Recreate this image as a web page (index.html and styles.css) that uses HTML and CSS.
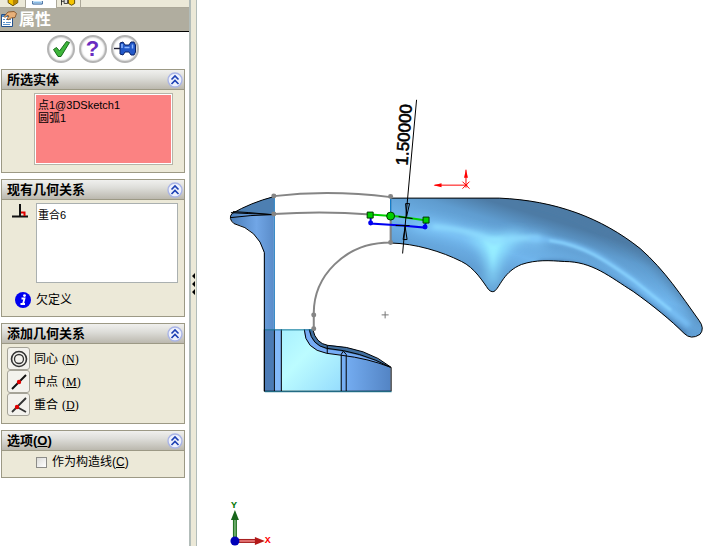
FILE: index.html
```html
<!DOCTYPE html>
<html lang="zh-CN">
<head>
    <meta charset="UTF-8">
    <meta name="viewport" content="width=device-width, initial-scale=1.0">
    <title>属性</title>
    <link rel="stylesheet" href="styles.css">
</head>
<body>
    <svg class="defs" aria-hidden="true">
        <symbol id="chevrons" viewBox="0 0 16 16">
            <circle cx="8" cy="8" r="7" fill="#eef1fc" stroke="#a9b4e6" stroke-width="1.4"/>
            <path d="M4.5 7.5 8 4l3.500 3.500M4.500 12 8 8.500 11.500 12" fill="none" stroke="#1c3fb4" stroke-width="1.6"/>
        </symbol>
    </svg>

    <div class="app">
        <aside class="sidebar">
            <div class="tabs">
                <button class="tab" aria-label="特征树">
                    <svg width="25" height="8" viewBox="0 0 25 8"><path d="M7.500-3h11v6l-5.500 3.500L7.500 3z" fill="#f5c400" stroke="#4d3b00"/><path d="M13 0v6l5-3V0z" fill="#b88600"/></svg>
                </button>
                <button class="tab active" aria-label="属性管理器">
                    <svg width="30" height="8" viewBox="0 0 30 8"><path d="M5.500-1v4.500h11V-1" fill="#d9efff" stroke="#174a8a"/><path d="M7 1.500h8" stroke="#6aa7dc"/></svg>
                </button>
                <button class="tab" aria-label="配置">
                    <svg width="23" height="8" viewBox="0 0 23 8"><path d="M3.500 0v6M3 1.500h6M10 3h3" stroke="#222" fill="none"/><path d="M6.500-1v5h4v-5" fill="#ddd" stroke="#333"/><path d="M11.500-1v5l3.500 2 3.500-2v-5z" fill="#f5c400" stroke="#4d3b00"/></svg>
                </button>
            </div>

            <div class="title-bar">
                <svg width="18" height="18" viewBox="0 0 18 18">
                    <path d="M1.500 3.500h11v12h-11z" fill="#fff" stroke="#23508c"/>
                    <path d="M2 5h10" stroke="#4b8fd0" stroke-width="2"/>
                    <path d="M3 8.500h2M6 8.500h5M3 11.500h2M6 11.500h5M3 13.500h7" stroke="#5a93cc"/>
                    <path d="M4 5.500 8 1l6-.5 2.500 2-1.500 4-4 .5-3 2-1-1 2-3-2-.500-2 2z" fill="#e7b079" stroke="#7c4a1d" stroke-width=".8"/>
                </svg>
                <h1>属性</h1>
            </div>

            <div class="actions">
                <button class="round" aria-label="确定">
                    <svg width="20" height="20" viewBox="0 0 20 20"><path d="M2.500 10.500l3-2L8.500 12 15.500 2.500l3 1L10 17.500H7z" fill="#3db53a" stroke="#176b1c"/></svg>
                </button>
                <button class="round help" aria-label="帮助">?</button>
                <button class="round" aria-label="保持可见">
                    <svg width="24" height="20" viewBox="0 0 24 20"><path d="M1 9.500h8" stroke="#223" stroke-width="1.400"/><path d="M7 4l3-1 2 3h4l2-3h3l1.500 3v7L21 16h-3l-2-3h-4l-2 3-3-1z" fill="#2258c8" stroke="#0b2368"/><path d="M11.500 8.500h5M19.500 5.500v4M9 5v4" stroke="#8fb8ff" stroke-width="1.500"/></svg>
                </button>
            </div>

            <section class="group">
                <div class="group-header">
                    <h2>所选实体</h2>
                    <button class="collapse" aria-label="折叠所选实体"><svg><use href="#chevrons"/></svg></button>
                </div>
                <div class="group-body selected">
                    <select class="list pink" size="5" multiple aria-label="所选实体">
                        <option>点1@3DSketch1</option>
                        <option>圆弧1</option>
                    </select>
                </div>
            </section>

            <section class="group">
                <div class="group-header">
                    <h2>现有几何关系</h2>
                    <button class="collapse" aria-label="折叠现有几何关系"><svg><use href="#chevrons"/></svg></button>
                </div>
                <div class="group-body existing">
                    <svg width="18" height="18" viewBox="0 0 18 18"><path d="M1 13.500h16M9 1v12" stroke="#111" stroke-width="2"/><path d="M10 9.500h3.500V13" fill="none" stroke="#e00000" stroke-width="2"/></svg>
                    <select class="list" size="5" multiple aria-label="现有几何关系">
                        <option>重合6</option>
                    </select>
                    <svg class="info" width="16" height="16" viewBox="0 0 16 16"><circle cx="8" cy="8" r="8" fill="#0000f0"/><path d="M6.500 6.500h3L8 12h2M5.500 12h3" stroke="#fff" stroke-width="1.800" fill="none"/><circle cx="9.500" cy="3.600" r="1.400" fill="#fff"/></svg>
                    <p class="status">欠定义</p>
                </div>
            </section>

            <section class="group">
                <div class="group-header">
                    <h2>添加几何关系</h2>
                    <button class="collapse" aria-label="折叠添加几何关系"><svg><use href="#chevrons"/></svg></button>
                </div>
                <div class="group-body relations">
                    <button class="relation">
                        <span class="key"><svg width="18" height="18" viewBox="0 0 18 18" fill="none" stroke="#333"><circle cx="9" cy="9" r="7.500" stroke-width="1.600"/><circle cx="9" cy="9" r="4.500" stroke-width="1.300"/></svg></span>
                        同心 <span class="hotkey">(<u>N</u>)</span>
                    </button>
                    <button class="relation">
                        <span class="key"><svg width="18" height="18" viewBox="0 0 18 18"><path d="M2 16 16 2" stroke="#111" stroke-width="2"/><circle cx="9" cy="9" r="2.200" fill="#e00000"/></svg></span>
                        中点 <span class="hotkey">(<u>M</u>)</span>
                    </button>
                    <button class="relation">
                        <span class="key"><svg width="18" height="18" viewBox="0 0 18 18"><path d="M2 16 16 2M7 11l9 5" stroke="#333" stroke-width="1.800"/><circle cx="7" cy="11" r="2.200" fill="#e00000"/></svg></span>
                        重合 <span class="hotkey">(<u>D</u>)</span>
                    </button>
                </div>
            </section>

            <section class="group">
                <div class="group-header">
                    <h2>选项(<u>O</u>)</h2>
                    <button class="collapse" aria-label="折叠选项"><svg><use href="#chevrons"/></svg></button>
                </div>
                <div class="group-body options">
                    <input type="checkbox" id="construction">
                    <label for="construction">作为构造线(<u>C</u>)</label>
                </div>
            </section>
        </aside>

        <div class="splitter">
            <svg width="5" height="24" viewBox="0 0 5 24"><path d="M4 1v6L1 4zM4 9v6L1 12zM4 17v6l-3-3z" fill="#000"/></svg>
        </div>

        <main class="viewport">
            <svg class="model" viewBox="197 -1 517 546" preserveAspectRatio="xMinYMin meet" role="img" aria-label="三维草图">
                <defs>
                    <linearGradient id="handle" gradientUnits="userSpaceOnUse" x1="480" y1="197" x2="460" y2="262">
                        <stop offset="0" stop-color="#4d7ba5"/>
                        <stop offset=".25" stop-color="#5f9ccf"/>
                        <stop offset=".65" stop-color="#70b5ec"/>
                        <stop offset="1" stop-color="#619fd4"/>
                    </linearGradient>
                    <linearGradient id="beak" x1="0" y1="0" x2="1" y2="0">
                        <stop offset="0" stop-color="#4a7db8"/>
                        <stop offset=".6" stop-color="#71a6e6"/>
                        <stop offset="1" stop-color="#5a8cc9"/>
                    </linearGradient>
                    <linearGradient id="glass" x1="0" y1="0" x2="1" y2="1">
                        <stop offset="0" stop-color="#a9f0ff"/>
                        <stop offset=".4" stop-color="#bcfcff"/>
                        <stop offset="1" stop-color="#95dcfd"/>
                    </linearGradient>
                    <linearGradient id="base" x1="0" y1="0" x2="1" y2="0">
                        <stop offset="0" stop-color="#78b1f6"/>
                        <stop offset="1" stop-color="#5384c4"/>
                    </linearGradient>
                    <filter id="soft" filterUnits="userSpaceOnUse" x="370" y="170" width="350" height="190"><feGaussianBlur stdDeviation="6"/></filter>
                    <filter id="fine" filterUnits="userSpaceOnUse" x="370" y="170" width="350" height="190"><feGaussianBlur stdDeviation="2"/></filter>
                    <filter id="thin" filterUnits="userSpaceOnUse" x="370" y="170" width="350" height="190"><feGaussianBlur stdDeviation="1"/></filter>
                    <path id="handle-shape" d="M391 197.500H500C556 200 602 217 641 248C666 270 682 295 700 320Q706 328 701 334Q692 340 685 333C672 320 655 306 634 291C610 276 593 261 565 261C550 260 537 259 522 264C505 271 501 285 496 290Q493 293 489 289C484 282 475 267 462 261C442 251 416 243 391 242.500Z"/>
                    <clipPath id="handle-clip"><use href="#handle-shape"/></clipPath>
                </defs>

                <!-- handle -->
                <use href="#handle-shape" fill="url(#handle)"/>
                <g clip-path="url(#handle-clip)" fill="none">
                    <path d="M530 190C580 200 612 219 645 246C672 270 686 293 708 322" stroke="#4d7ba5" stroke-width="12" filter="url(#soft)"/>
                    <path d="M540 264C585 260 605 277 634 294L686 336" stroke="#477cb0" stroke-width="8" filter="url(#fine)"/>
                    <path d="M415 224Q460 228 493 243Q515 235 545 241" stroke="#86d0ff" stroke-width="8" filter="url(#soft)"/>
                    <path d="M472 235Q491 245 493 285Q497 247 520 235Q495 242 472 235Z" fill="#91e8ff" stroke="#8bdfff" stroke-width="6" filter="url(#soft)"/>
                    <path d="M482 238Q493 246 493 272Q495 246 506 238Z" fill="#97eeff" filter="url(#fine)"/>
                    <path d="M433 226Q472 229 494 242Q518 235 541 238" stroke="#8fddff" stroke-width="4" filter="url(#fine)"/>
                    <path d="M530 238C583 239 608 260 636 281L690 325" stroke="#7cc4fa" stroke-width="4" filter="url(#fine)"/>
                    <path d="M550 240C586 245 608 261 636 281L672 310" stroke="#8bd6ff" stroke-width="2" filter="url(#thin)"/>
                </g>
                <use href="#handle-shape" fill="none" stroke="#000"/>
                <path d="M391 197v17" stroke="#158be0"/>

                <!-- beak and left column -->
                <path d="M274 196Q251 202 232 213Q228 218 234 223Q258 229 264 252V391H274Z" fill="url(#beak)"/>
                <path d="M274 196Q251 202 232 213L274 214Z" fill="#4d7fb2"/>
                <path d="M274 196Q251 202 232 213Q228 218 234 223Q258 229 264.500 252V391M231 212l18 1 25 1M231 217l20-2 23-1M233 211l16 1 22 2" fill="none" stroke="#000"/>
                <path d="M274.500 196v133" stroke="#1777bd"/>

                <!-- base -->
                <path d="M265 329h9v62h-9z" fill="#4b7ab5"/>
                <path d="M274 329h8v62h-8z" fill="#82b8fa"/>
                <path d="M282 329H304Q306 350 328 353L342 355V391H282Z" fill="url(#glass)"/>
                <path d="M341 349Q370 354 391 367V391H341Z" fill="url(#base)"/>
                <path d="M304 329H313Q316 343 328 345Q365 347 391 367L385 365Q362 357 342 355L327 353Q305 349 304 329Z" fill="#76acf6"/>
                <path d="M309 329H313Q316 343 328 345Q365 347 391 367Q359 352 327 349Q311 344 309 329Z" fill="#416f9f"/>
                <path d="M264.500 329V391H391.500V367Q367 347 328 345Q316 343 313 329M274.500 329v62M281.500 329v62M304.500 329Q305 349 327 353L342 355Q368 358 391 367M309.500 329Q312 345 327 348Q361 351 391 367M327.500 345v8M341.500 391V354l2-3 3 3V391" fill="none" stroke="#000"/>
                <path d="M265 329.500h48M265 391.500h127" stroke="#1b7898"/>

                <!-- sketch curves -->
                <g fill="none" stroke="#858585" stroke-width="2">
                    <path d="M274 195.500Q330 189 391 196.500M274 213.500Q323 210 371 214M391 214v28C345 242 313 276 314 315V329"/>
                </g>
                <g fill="#858585">
                    <circle cx="274" cy="195.500" r="2.500"/><circle cx="274" cy="213.500" r="2.500"/><circle cx="391" cy="196" r="2.500"/>
                    <circle cx="391" cy="242" r="2.500"/><circle cx="314" cy="314.500" r="2.500"/><circle cx="314" cy="328.500" r="2.500"/>
                </g>
                <path d="M382 314.500h7M385.500 311v7" stroke="#777"/>

                <!-- dimension -->
                <path d="M371 214v9l31 2 23 2 2-8" fill="none" stroke="#0000f0" stroke-width="2"/>
                <circle cx="371" cy="222.500" r="2.500" fill="#0000f0"/><circle cx="425.500" cy="226.500" r="2.500" fill="#0000f0"/>
                <path d="M371 214l28 2 28 4" fill="none" stroke="#00d000" stroke-width="2"/>
                <path d="M417 99 403 253M399 216l14 2M396 225h14" stroke="#000" fill="none"/>
                <path d="M406 203h4l-3 13zM403.500 239h4l-2-13z" fill="none" stroke="#000"/>
                <path d="M367.500 211.500h6v6h-6zM423.500 216.500h6v6h-6z" fill="#00d000" stroke="#003800"/>
                <circle cx="391" cy="215.500" r="4" fill="#00d000" stroke="#003800"/>
                <text class="dimension" transform="translate(408 165) rotate(-86)">1.50000</text>

                <!-- sketch origin -->
                <path d="M435 184.500h33M466.500 169v18M463 181l7 7M470 181l-7 7" stroke="#f00" fill="none"/>
                <path d="M434 184.500l8-2v4zM466.500 169l-2 8h4z" fill="#f00"/>

                <!-- view triad -->
                <path d="M235 540V517" stroke="#207020" stroke-width="4"/>
                <path d="M235 540V517" stroke="#69a969" stroke-width="2"/>
                <path d="M235 510l-4 10h8z" fill="#17641b"/>
                <path d="M236 541h22" stroke="#a51d1d" stroke-width="4"/>
                <path d="M236 541h22" stroke="#e07070" stroke-width="2"/>
                <path d="M265 541l-10-4v8z" fill="#b31818"/>
                <circle cx="235" cy="541" r="4.500" fill="#0000b8"/>
                <text class="axis axis-y" x="231" y="508">Y</text>
                <text class="axis axis-x" x="265" y="543">X</text>
            </svg>
        </main>
    </div>
</body>
</html>
```
FILE: styles.css
```css
* {
    box-sizing: border-box;
}

body {
    margin: 0;
    background-color: #fff;
    color: #000;
    font-family: "Liberation Sans", "Noto Sans CJK SC", sans-serif;
    font-size: 12px;
    line-height: 16px;
}

button {
    padding: 0;
    border: none;
    background: none;
    color: inherit;
    font: inherit;
}

svg {
    display: block;
}

.defs {
    display: none;
}

.app {
    display: flex;
    height: 100vh;
    overflow: hidden;
}

.sidebar {
    flex: 0 0 189px;
    overflow: hidden;
}

.tabs {
    display: flex;
    height: 8px;
    background-color: #ece9d8;
    border-bottom: 1px solid #aca899;
}

.tab {
    height: 7px;
    overflow: hidden;
    border-right: 1px solid #aca899;
}

.tab svg {
    height: 7px;
}

.tab.active {
    height: 8px;
    background-color: #fff;
}

.title-bar {
    display: flex;
    align-items: center;
    gap: 1px;
    height: 24px;
    background-color: #b0ad9f;
    border-bottom: 1px solid #000;
}

.title-bar h1 {
    margin: 0;
    color: #fff;
    font-size: 16px;
    font-weight: bold;
}

.actions {
    display: flex;
    justify-content: center;
    gap: 4px;
    padding: 3px 4px 6px 0;
}

.round {
    display: flex;
    align-items: center;
    justify-content: center;
    width: 28px;
    height: 28px;
    border: 2px solid #b4b4b4;
    border-radius: 50%;
    background-color: #fff;
    box-shadow: inset 0 0 2px #999;
}

.round svg {
    flex: none;
}

.help {
    color: #6a2cc0;
    font-size: 22px;
    font-weight: bold;
}

.group {
    margin: 0 4px 6px 1px;
    border: 1px solid #9c9985;
    background-color: #ece9d8;
}

.group-header {
    display: flex;
    align-items: center;
    justify-content: space-between;
    height: 20px;
    padding: 0 1px 0 5px;
    border-bottom: 1px solid #9c9985;
    background: linear-gradient(#f0f0ee, #dededa 40%, #bbb8ae);
}

.group-header h2 {
    margin: 0;
    font-size: 13px;
    font-weight: bold;
}

.collapse svg {
    width: 16px;
    height: 16px;
}

.list {
    display: block;
    width: 100%;
    margin: 0;
    padding: 0;
    border: 1px solid #aab0b0;
    border-radius: 0;
    background-color: #fff;
    color: #000;
    font-family: inherit;
    font-size: 11px;
    overflow: hidden;
    outline: none;
}

.list option {
    height: 13px;
    min-height: 0;
    padding: 0 1px;
    line-height: 13px;
}

.list.pink {
    height: 72px;
    border-color: #b5b5a8;
    background-color: #fb8282;
    box-shadow: inset 0 0 0 1px #fff;
    padding: 2px;
}

.selected {
    padding: 3px 11px 7px 32px;
}

.existing {
    display: grid;
    grid-template-columns: 20px 1fr;
    column-gap: 5px;
    row-gap: 9px;
    padding: 3px 6px 8px 9px;
}

.existing .list {
    height: 80px;
    padding: 2px 0;
}

.info {
    justify-self: end;
}

.status {
    margin: 0;
}

.relations {
    display: flex;
    flex-direction: column;
    align-items: flex-start;
    padding: 3px 5px 7px;
}

.relation {
    display: flex;
    align-items: center;
    gap: 4px;
}

.key {
    display: flex;
    align-items: center;
    justify-content: center;
    width: 23px;
    height: 23px;
    border: 1px solid #a5a398;
    border-radius: 3px;
    background-color: #f3f2ed;
}

.hotkey {
    font-family: "Liberation Serif", serif;
}

.options {
    display: flex;
    align-items: center;
    gap: 5px;
    padding: 3px 5px 7px 34px;
}

.options input {
    appearance: none;
    width: 11px;
    height: 11px;
    margin: 0;
    border: 1px solid #8c8c88;
    background: linear-gradient(135deg, #dcdcd8, #fff);
}

.splitter {
    display: flex;
    align-items: center;
    flex: 0 0 7px;
    padding-top: 22px;
    border-left: 2px solid #b2bcb9;
    border-right: 1px solid #b2bcb9;
    background-color: #ece9d8;
}

.viewport {
    flex: 1;
    min-width: 0;
}

.model {
    width: 100%;
    height: 100%;
}

.dimension {
    font-family: "Liberation Sans", sans-serif;
    font-size: 17px;
    stroke: #000;
    stroke-width: 0.6px;
}

.axis {
    font-family: "Liberation Mono", monospace;
    font-size: 10px;
    font-weight: bold;
}

.axis-x {
    fill: #f00;
}

.axis-y {
    fill: #087808;
}
```
